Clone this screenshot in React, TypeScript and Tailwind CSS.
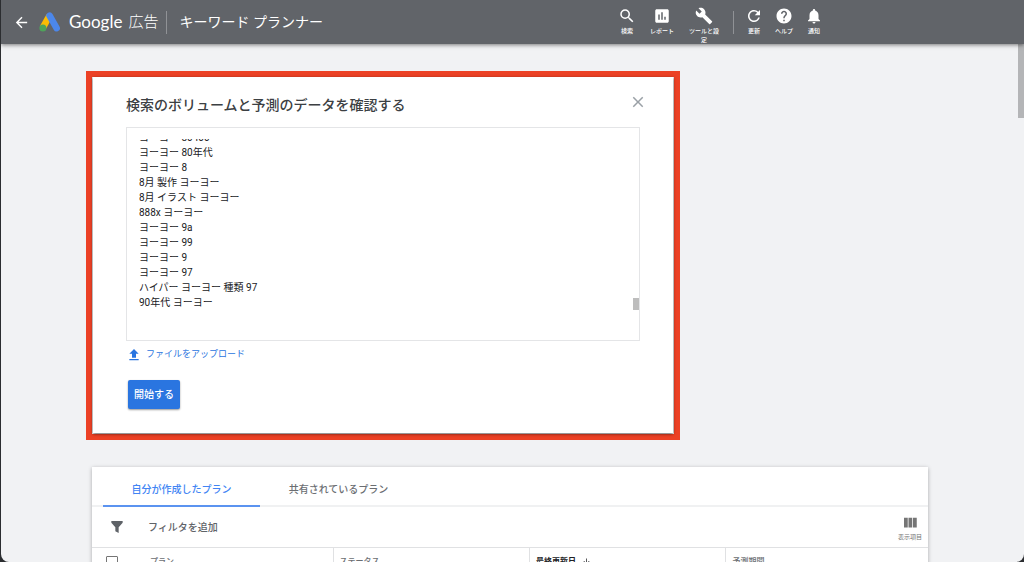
import { useEffect, useRef } from "react";
import {
  MdArrowBack,
  MdArrowDownward,
  MdAssessment,
  MdClose,
  MdHelp,
  MdNotifications,
  MdRefresh,
  MdSearch,
} from "react-icons/md";

const mainTools = [
  { label: "検索", icon: <MdSearch size={18} className="shrink-0" /> },
  { label: "レポート", icon: <MdAssessment size={18} className="shrink-0" /> },
  { label: "ツールと設定", icon: <WrenchIcon /> },
];

const sideTools = [
  { label: "更新", icon: <MdRefresh size={18} className="shrink-0" /> },
  { label: "ヘルプ", icon: <MdHelp size={18} className="shrink-0" /> },
  { label: "通知", icon: <MdNotifications size={18} className="shrink-0" /> },
];

const keywords = [
  "ヨーヨー 80400",
  "ヨーヨー 80年代",
  "ヨーヨー 8",
  "8月 製作 ヨーヨー",
  "8月 イラスト ヨーヨー",
  "888x ヨーヨー",
  "ヨーヨー 9a",
  "ヨーヨー 99",
  "ヨーヨー 9",
  "ヨーヨー 97",
  "ハイパー ヨーヨー 種類 97",
  "90年代 ヨーヨー",
];

function WrenchIcon() {
  return (
    <svg viewBox="0 0 24 24" className="size-[18px] shrink-0" fill="currentColor">
      <path d="M22.7 19l-9.1-9.1c.9-2.3.4-5-1.5-6.9-2-2-5-2.4-7.4-1.3L9 6 6 9 1.6 4.7C.4 7.1.9 10.1 2.9 12.1c1.9 1.9 4.6 2.4 6.9 1.5l9.1 9.1c.4.4 1 .4 1.4 0l2.3-2.3c.5-.4.5-1.1.1-1.4z" />
    </svg>
  );
}

function AdsLogo() {
  return (
    <svg viewBox="0 0 22 20" className="h-5 w-[22px]">
      <path d="M10.4 3.9L4 15.4" stroke="#fbbc04" strokeWidth="6.6" />
      <path d="M10.6 3.7L17.6 16.1" stroke="#4c87ea" strokeWidth="6.6" strokeLinecap="round" />
      <circle cx="3.9" cy="16" r="3.5" fill="#4ea35a" />
    </svg>
  );
}

function ToolButton({ label, icon }: { label: string; icon: React.ReactNode }) {
  return (
    <button className="flex min-w-4 max-w-[30px] flex-col items-center gap-0.5 text-[6px] leading-[9px] font-medium">
      <span className="flex size-4 items-center justify-center">{icon}</span>
      <span className="text-center">{label}</span>
    </button>
  );
}

function Header() {
  return (
    <header className="relative z-10 flex h-11 shrink-0 items-center bg-[#616469] text-white shadow-[0_1px_4px_rgba(0,0,0,0.5)]">
      <button aria-label="戻る" className="ml-3">
        <MdArrowBack size={17} />
      </button>
      <div className="ml-[9px] flex items-center">
        <AdsLogo />
        <span className="ml-2 font-['Lato'] text-[17px] leading-5">Google</span>
        <span className="ml-1.5 text-[15px] leading-5 font-light">広告</span>
      </div>
      <div className="ml-2 h-[23px] w-px bg-[#909296]" />
      <h1 className="ml-3 text-sm">キーワード プランナー</h1>
      <div className="ml-auto flex items-start gap-3.5 self-start pt-2 pr-[202px]">
        <div className="flex items-start gap-[15px]">
          {mainTools.map((tool) => (
            <ToolButton key={tool.label} {...tool} />
          ))}
        </div>
        <div className="mt-[3px] h-[23px] w-px bg-[#909296]" />
        <div className="-ml-0.5 flex items-start gap-[13px]">
          {sideTools.map((tool) => (
            <ToolButton key={tool.label} {...tool} />
          ))}
        </div>
      </div>
    </header>
  );
}

function VolumeCard() {
  const area = useRef<HTMLTextAreaElement>(null);

  useEffect(() => {
    if (area.current) area.current.scrollTop = 9;
  }, []);

  return (
    <div className="max-w-[594px] border-[6px] border-[#ec4125]">
      <section className="mx-px mb-px bg-white px-[33px] pt-[18px] pb-6 shadow-[0_1px_3px_rgba(0,0,0,0.6)]">
        <div className="mb-3 flex items-start justify-between">
          <label htmlFor="keywords" className="text-sm leading-5 font-medium text-[#3c4043]">
            検索のボリュームと予測のデータを確認する
          </label>
          <button aria-label="閉じる" className="-mt-0.5 -mr-[7px] text-[#9aa0a6]">
            <MdClose size={18} />
          </button>
        </div>
        <div className="relative border border-[#e4e5e7] py-[11px] pl-3">
          <textarea
            id="keywords"
            ref={area}
            defaultValue={keywords.join("\n")}
            className="block h-[190px] w-full resize-none overflow-hidden pb-5 text-[10px] leading-[15px] text-[#202124] outline-none"
          />
          <div className="absolute right-0 bottom-[30px] h-3 w-1.5 bg-[#bdbdbd]" />
        </div>
        <button className="mt-1.5 flex h-4 items-center gap-1 text-[9px] text-[#2a75e0]">
          <svg viewBox="0 0 24 24" className="size-4" fill="currentColor">
            <path d="M5 20h14v-2H5v2zm0-10h4v6h6v-6h4l-7-7-7 7z" />
          </svg>
          ファイルをアップロード
        </button>
        <button className="mt-[17px] ml-0.5 block h-[29px] rounded-xs bg-[#2a75e0] px-1.5 text-[10px] font-medium text-white shadow-[0_1px_2px_rgba(0,0,0,0.4)]">
          開始する
        </button>
      </section>
    </div>
  );
}

function PlansCard() {
  return (
    <section className="mt-[27px] ml-1.5 bg-white shadow-[0_1px_4px_rgba(0,0,0,0.3)]">
      <div className="flex h-10 border-b-2 border-[#f0f1f2] pl-[11px] text-[10px] font-medium">
        <button className="-mb-0.5 w-[157px] border-b-2 border-[#5b93f0] pt-1.5 text-[#4285f4]">自分が作成したプラン</button>
        <button className="w-[157px] pt-1.5 text-[#6b6e72]">共有されているプラン</button>
      </div>
      <div className="flex h-10 items-center pr-1.5 pl-[17px] text-[#5f6368]">
        <svg viewBox="0 0 24 24" className="size-4" fill="currentColor">
          <path d="M3.500 3h17v2.500L14.500 12.500V21L9.500 18.500V12.500L3.500 5.500z" />
        </svg>
        <button className="ml-[23px] text-[10px] font-medium">フィルタを追加</button>
        <button className="ml-auto flex flex-col items-center text-[6px] leading-[9px] text-[#757575]">
          <svg viewBox="0 0 24 24" className="size-[18px]" fill="currentColor">
            <path d="M10 18h5V5h-5v13zm-6 0h5V5H4v13zM16 5v13h5V5h-5z" />
          </svg>
          表示項目
        </button>
      </div>
      <table className="w-full table-fixed border-t border-[#e0e1e3] text-left text-[8px] leading-3 text-[#6b6e72]">
        <thead>
          <tr className="h-7">
            <th className="w-[241px] pl-3.5 font-medium">
              <div className="flex items-center gap-8">
                <input
                  type="checkbox"
                  aria-label="すべて選択"
                  className="size-3 appearance-none rounded-[1px] border border-[#757575]"
                />
                プラン
              </div>
            </th>
            <th className="w-[23.5%] border-l border-[#e0e1e3] pl-1.5 font-medium">ステータス</th>
            <th className="w-[23.5%] border-l border-[#e0e1e3] pl-1.5 font-bold text-[#202124]">
              <div className="flex items-center gap-1.5">
                最終更新日
                <MdArrowDownward size={9} />
              </div>
            </th>
            <th className="border-l border-[#e0e1e3] pl-1.5 font-medium">予測期間</th>
          </tr>
        </thead>
      </table>
    </section>
  );
}

export default function App() {
  return (
    <div className="h-screen bg-[#2b2d30] pl-px font-['Roboto','Noto_Sans_CJK_JP',sans-serif]">
      <div className="relative flex h-full flex-col overflow-hidden rounded-b-lg bg-[#f1f2f4]">
        <Header />
        <main className="min-h-0 flex-1 overflow-hidden pt-[27px] pr-24 pl-[85px]">
          <VolumeCard />
          <PlansCard />
        </main>
        <div className="absolute top-11 right-0 h-[74px] w-1.5 bg-[#b4b5b7]" />
      </div>
    </div>
  );
}
